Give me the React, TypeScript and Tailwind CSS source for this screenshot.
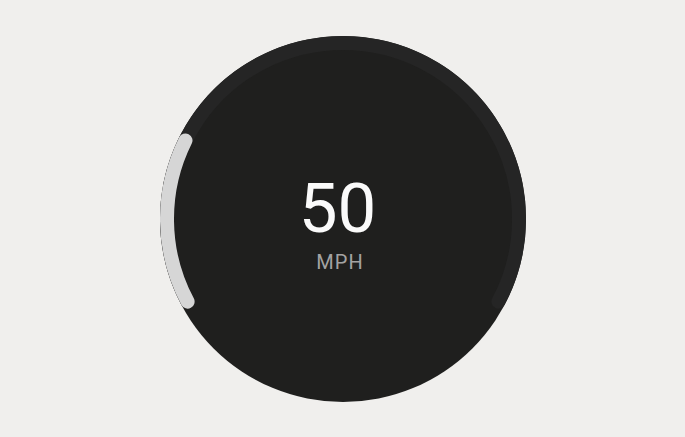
import React from "react";

export default function App() {
  return (
    <div className="w-[685px] h-[437px] bg-[#f0efed] flex items-center justify-center" style={{ fontFamily: "Roboto, 'Liberation Sans', sans-serif" }}>
      <div className="relative w-[366px] h-[366px] rounded-full bg-[#1f1f1e] flex flex-col items-center justify-center pt-[9px]">
        <svg className="absolute inset-0" width="366" height="366" viewBox="0 0 366 366" fill="none">
          <path d="M 27.60 265.63 A 176 176 0 1 1 338.40 265.63" stroke="#252525" strokeWidth="14" strokeLinecap="round" />
          <path d="M 27.60 265.63 A 176 176 0 0 1 25.49 104.47" stroke="#d6d6d6" strokeWidth="14" strokeLinecap="round" />
        </svg>
        <div className="relative -ml-[10px] text-[69px] leading-none text-[#fafafa] font-normal">50</div>
        <div className="relative -ml-[5px] mt-[9px] text-[20px] tracking-[1px] leading-none text-[#a3a3a3]">MPH</div>
      </div>
    </div>
  );
}
